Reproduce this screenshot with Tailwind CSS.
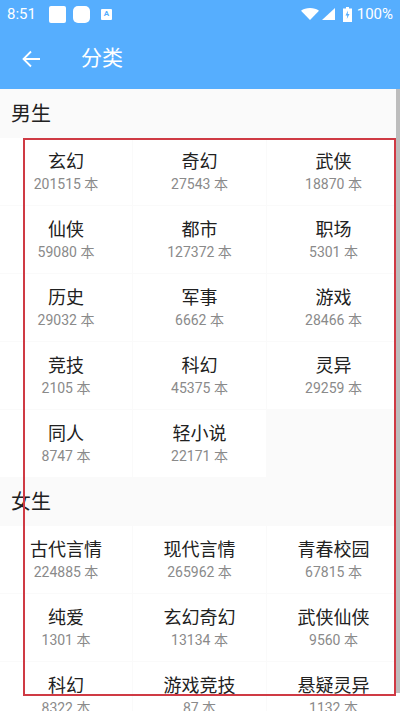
<!DOCTYPE html>
<html lang="zh">
<head>
<meta charset="UTF-8">
<meta name="viewport" content="width=device-width, initial-scale=1.0">
<title>分类</title>
<script src="https://cdn.jsdelivr.net/npm/@tailwindcss/browser@4"></script>
</head>
<body class="relative h-[711px] w-[400px] overflow-hidden bg-[#fafafa] font-['Roboto','Noto_Sans_CJK_SC',sans-serif]">

<!-- status bar + toolbar -->
<header class="h-[89px] bg-[#56aefe] text-white">
  <div class="flex h-[28px] items-center pl-[7px] pr-[7px]">
    <span class="w-[42px] text-[15px]">8:51</span>
    <div class="size-[17px] rounded-[2px] bg-white"></div>
    <div class="ml-[7px] size-[17px] rounded-[5px] bg-white"></div>
    <div class="ml-[11px] flex size-[11px] items-center justify-center rounded-[1px] bg-white text-[8px] font-bold text-[#56aefe]">A</div>
    <div class="ml-auto flex items-center">
      <svg width="18" height="12" viewBox="0 0 18 12"><path d="M0 2.800C2.300 1 5.500 0 9 0S15.700 1 18 2.800L9 12Z" fill="#fff"/></svg>
      <svg class="ml-[3px]" width="13" height="12" viewBox="0 0 13 12"><path d="M13 0V12H0Z" fill="#fff"/></svg>
      <svg class="ml-[8px]" width="9" height="15" viewBox="0 0 9 15"><path d="M3 0H6V1.500H9V15H0V1.500H3Z" fill="#fff"/><path d="M5 3.500L2.500 8.500H4.300L3.800 12L6.500 7H4.700Z" fill="#56aefe"/></svg>
      <span class="ml-[5px] text-[15px]">100%</span>
    </div>
  </div>
  <div class="flex h-[61px] items-center">
    <svg class="ml-[22px]" width="18" height="18" viewBox="0 0 18 18" fill="none" stroke="#fff" stroke-width="1.800"><path d="M18 9H1.500M9 1.500L1.500 9L9 16.500"/></svg>
    <h1 class="ml-[41px] text-[21px]">分类</h1>
  </div>
</header>

<main class="text-center">
  <h2 class="flex h-[49px] items-center pl-[11px] text-[20px] text-[#212121]">男生</h2>
  <div class="grid grid-cols-[132px_133px_133px] gap-[1px]">
    <div class="flex h-[67px] flex-col items-center bg-white pt-[12px]"><p class="text-[18px] leading-[24px] text-[#212121]">玄幻</p><p class="text-[14px] leading-[20px] text-[#8a8a8a]">201515 本</p></div>
    <div class="flex h-[67px] flex-col items-center bg-white pt-[12px]"><p class="text-[18px] leading-[24px] text-[#212121]">奇幻</p><p class="text-[14px] leading-[20px] text-[#8a8a8a]">27543 本</p></div>
    <div class="flex h-[67px] flex-col items-center bg-white pt-[12px]"><p class="text-[18px] leading-[24px] text-[#212121]">武侠</p><p class="text-[14px] leading-[20px] text-[#8a8a8a]">18870 本</p></div>
    <div class="flex h-[67px] flex-col items-center bg-white pt-[12px]"><p class="text-[18px] leading-[24px] text-[#212121]">仙侠</p><p class="text-[14px] leading-[20px] text-[#8a8a8a]">59080 本</p></div>
    <div class="flex h-[67px] flex-col items-center bg-white pt-[12px]"><p class="text-[18px] leading-[24px] text-[#212121]">都市</p><p class="text-[14px] leading-[20px] text-[#8a8a8a]">127372 本</p></div>
    <div class="flex h-[67px] flex-col items-center bg-white pt-[12px]"><p class="text-[18px] leading-[24px] text-[#212121]">职场</p><p class="text-[14px] leading-[20px] text-[#8a8a8a]">5301 本</p></div>
    <div class="flex h-[67px] flex-col items-center bg-white pt-[12px]"><p class="text-[18px] leading-[24px] text-[#212121]">历史</p><p class="text-[14px] leading-[20px] text-[#8a8a8a]">29032 本</p></div>
    <div class="flex h-[67px] flex-col items-center bg-white pt-[12px]"><p class="text-[18px] leading-[24px] text-[#212121]">军事</p><p class="text-[14px] leading-[20px] text-[#8a8a8a]">6662 本</p></div>
    <div class="flex h-[67px] flex-col items-center bg-white pt-[12px]"><p class="text-[18px] leading-[24px] text-[#212121]">游戏</p><p class="text-[14px] leading-[20px] text-[#8a8a8a]">28466 本</p></div>
    <div class="flex h-[67px] flex-col items-center bg-white pt-[12px]"><p class="text-[18px] leading-[24px] text-[#212121]">竞技</p><p class="text-[14px] leading-[20px] text-[#8a8a8a]">2105 本</p></div>
    <div class="flex h-[67px] flex-col items-center bg-white pt-[12px]"><p class="text-[18px] leading-[24px] text-[#212121]">科幻</p><p class="text-[14px] leading-[20px] text-[#8a8a8a]">45375 本</p></div>
    <div class="flex h-[67px] flex-col items-center bg-white pt-[12px]"><p class="text-[18px] leading-[24px] text-[#212121]">灵异</p><p class="text-[14px] leading-[20px] text-[#8a8a8a]">29259 本</p></div>
    <div class="flex h-[67px] flex-col items-center bg-white pt-[12px]"><p class="text-[18px] leading-[24px] text-[#212121]">同人</p><p class="text-[14px] leading-[20px] text-[#8a8a8a]">8747 本</p></div>
    <div class="flex h-[67px] flex-col items-center bg-white pt-[12px]"><p class="text-[18px] leading-[24px] text-[#212121]">轻小说</p><p class="text-[14px] leading-[20px] text-[#8a8a8a]">22171 本</p></div>
  </div>
  <h2 class="flex h-[49px] items-center pl-[11px] text-[20px] text-[#212121]">女生</h2>
  <div class="grid grid-cols-[132px_133px_133px] gap-[1px]">
    <div class="flex h-[67px] flex-col items-center bg-white pt-[12px]"><p class="text-[18px] leading-[24px] text-[#212121]">古代言情</p><p class="text-[14px] leading-[20px] text-[#8a8a8a]">224885 本</p></div>
    <div class="flex h-[67px] flex-col items-center bg-white pt-[12px]"><p class="text-[18px] leading-[24px] text-[#212121]">现代言情</p><p class="text-[14px] leading-[20px] text-[#8a8a8a]">265962 本</p></div>
    <div class="flex h-[67px] flex-col items-center bg-white pt-[12px]"><p class="text-[18px] leading-[24px] text-[#212121]">青春校园</p><p class="text-[14px] leading-[20px] text-[#8a8a8a]">67815 本</p></div>
    <div class="flex h-[67px] flex-col items-center bg-white pt-[12px]"><p class="text-[18px] leading-[24px] text-[#212121]">纯爱</p><p class="text-[14px] leading-[20px] text-[#8a8a8a]">1301 本</p></div>
    <div class="flex h-[67px] flex-col items-center bg-white pt-[12px]"><p class="text-[18px] leading-[24px] text-[#212121]">玄幻奇幻</p><p class="text-[14px] leading-[20px] text-[#8a8a8a]">13134 本</p></div>
    <div class="flex h-[67px] flex-col items-center bg-white pt-[12px]"><p class="text-[18px] leading-[24px] text-[#212121]">武侠仙侠</p><p class="text-[14px] leading-[20px] text-[#8a8a8a]">9560 本</p></div>
    <div class="flex h-[67px] flex-col items-center bg-white pt-[12px]"><p class="text-[18px] leading-[24px] text-[#212121]">科幻</p><p class="text-[14px] leading-[20px] text-[#8a8a8a]">8322 本</p></div>
    <div class="flex h-[67px] flex-col items-center bg-white pt-[12px]"><p class="text-[18px] leading-[24px] text-[#212121]">游戏竞技</p><p class="text-[14px] leading-[20px] text-[#8a8a8a]">87 本</p></div>
    <div class="flex h-[67px] flex-col items-center bg-white pt-[12px]"><p class="text-[18px] leading-[24px] text-[#212121]">悬疑灵异</p><p class="text-[14px] leading-[20px] text-[#8a8a8a]">1132 本</p></div>
  </div>
</main>

<!-- scrollbar and annotation box sit over the list -->
<div class="absolute right-0 top-[89px] h-[604px] w-[4px] bg-[#bdbdbd]"></div>
<div class="absolute left-[23px] top-[138px] h-[558px] w-[373px] border-2 border-[#cf3a44]"></div>
</body>
</html>
